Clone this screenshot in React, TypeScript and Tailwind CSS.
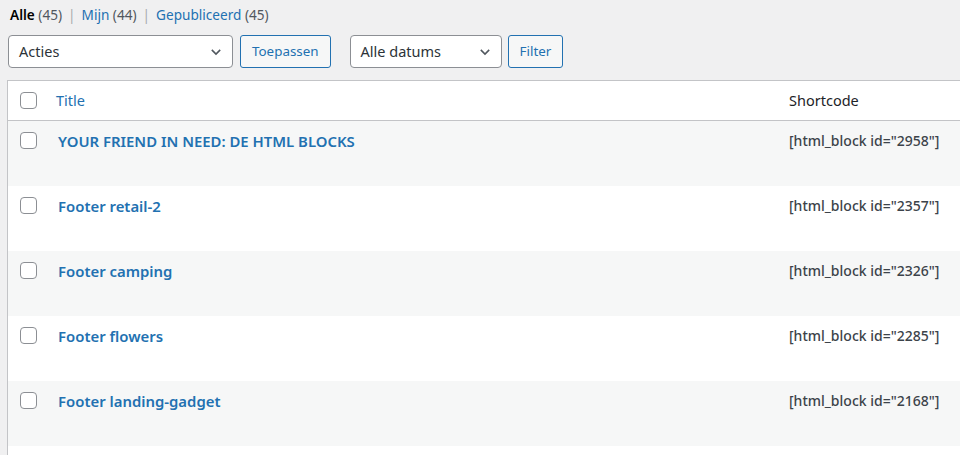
import React from 'react';

interface Block {
  id: number;
  title: string;
}

const blocks: Block[] = [
  { id: 2958, title: 'YOUR FRIEND IN NEED: DE HTML BLOCKS' },
  { id: 2357, title: 'Footer retail-2' },
  { id: 2326, title: 'Footer camping' },
  { id: 2285, title: 'Footer flowers' },
  { id: 2168, title: 'Footer landing-gadget' },
];

function Checkbox() {
  return <span className="block w-[17px] h-[17px] rounded border border-[#8c8f94] bg-white" />;
}

function Chevron() {
  return (
    <svg width="14" height="14" viewBox="0 0 20 20" fill="none" stroke="#50575e" strokeWidth="2.2">
      <path d="M4 7l6 6 6-6" />
    </svg>
  );
}

function Select({ label, width }: { label: string; width: string }) {
  return (
    <div
      className={`${width} h-[33px] flex items-center justify-between pl-[10px] pr-[9px] bg-white border border-[#8c8f94] rounded text-[14.5px] text-[#2c3338]`}
    >
      <span>{label}</span>
      <Chevron />
    </div>
  );
}

function Button({ label }: { label: string }) {
  return (
    <button className="h-[33px] px-[11px] bg-[#f6f7f7] border border-[#2271b1] rounded-[3px] text-[13.4px] text-[#2271b1]">
      {label}
    </button>
  );
}

export default function App() {
  return (
    <div
      className="h-[455px] bg-[#f0f0f1] overflow-hidden text-[13px] text-[#3c434a]"
      style={{ fontFamily: '"Noto Sans", "Open Sans", sans-serif' }}
    >
      {/* Filter links */}
      <ul className="flex items-center pl-[10px] pt-[3px] h-[28px] text-[13.6px]">
        <li>
          <span className="font-semibold text-black">Alle</span>{' '}
          <span className="text-[#50575e]">(45)</span>
          <span className="text-[#a7aaad] mx-[6px]">|</span>
        </li>
        <li>
          <span className="text-[#2271b1]">Mijn</span>{' '}
          <span className="text-[#50575e]">(44)</span>
          <span className="text-[#a7aaad] mx-[6px]">|</span>
        </li>
        <li>
          <span className="text-[#2271b1]">Gepubliceerd</span>{' '}
          <span className="text-[#50575e]">(45)</span>
        </li>
      </ul>

      {/* Bulk actions */}
      <div className="flex items-start pl-[8px] pt-[7px] h-[52px]">
        <Select label="Acties" width="w-[225px]" />
        <div className="ml-[7px]">
          <Button label="Toepassen" />
        </div>
        <div className="ml-[19px]">
          <Select label="Alle datums" width="w-[152px]" />
        </div>
        <div className="ml-[6px]">
          <Button label="Filter" />
        </div>
      </div>

      {/* List table */}
      <div className="ml-[7px] w-[1000px] h-[375px] bg-white border-l border-t border-[#c3c4c7]">
        <div className="flex items-center h-[40px] border-b border-[#c3c4c7]">
          <div className="w-[48px] pl-[12px]">
            <Checkbox />
          </div>
          <div className="flex-1 text-[14.5px] text-[#2271b1]">Title</div>
          <div className="w-[218px] text-[14.5px] text-[#1d2327]">Shortcode</div>
        </div>
        {blocks.map((block, i) => (
          <div
            key={block.id}
            className={`flex items-start h-[65px] pt-[11px] ${i % 2 === 0 ? 'bg-[#f6f7f7]' : 'bg-white'}`}
          >
            <div className="w-[48px] pl-[12px]">
              <Checkbox />
            </div>
            <div className="flex-1 pl-[2px] text-[14.9px] font-semibold text-[#2271b1] leading-[18px]">
              {block.title}
            </div>
            <div className="w-[218px] text-[14px] font-medium text-[#3c434a] leading-[18px]">
              [html_block id="{block.id}"]
            </div>
          </div>
        ))}
      </div>
    </div>
  );
}
